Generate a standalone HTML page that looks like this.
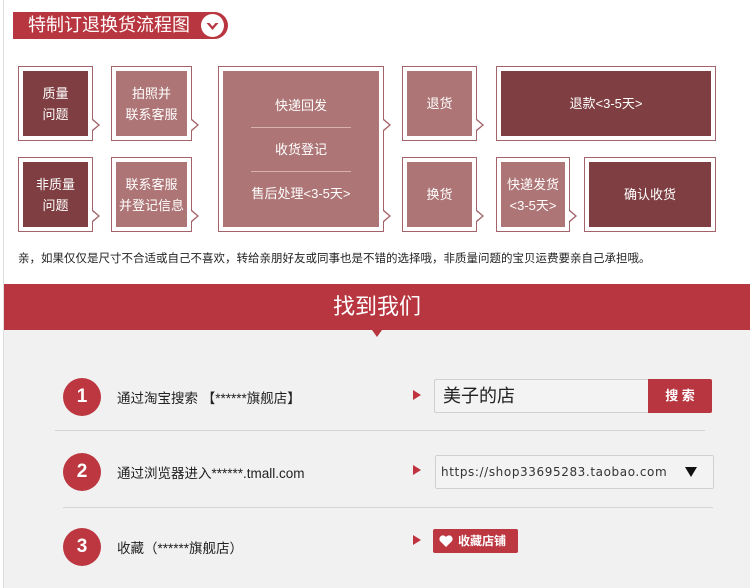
<!DOCTYPE html>
<html><head><meta charset="utf-8"><style>
*{margin:0;padding:0;box-sizing:border-box}
body{width:750px;height:588px;background:#fff;position:relative;overflow:hidden;font-family:"Liberation Sans","Noto Sans CJK SC",sans-serif}
.a{position:absolute}
.ob{position:absolute;border:1px solid #a4636a;background:#fff}
.ib{position:absolute;left:4px;top:4px;right:4px;bottom:4px;color:#fff;font-size:13px;display:flex;flex-direction:column;align-items:center;justify-content:center;text-align:center;line-height:21px}
.d{background:#7f3f42}.l{background:#ae7576}
.nt{position:absolute;width:0;height:0;border-top:6px solid transparent;border-bottom:6px solid transparent;border-left:7px solid #a4636a}
.nt:after{content:"";position:absolute;left:-8px;top:-5px;border-top:5px solid transparent;border-bottom:5px solid transparent;border-left:6px solid #fff}
.c{position:absolute;left:63px;width:38px;height:38px;border-radius:50%;background:#bd3741;color:#fff;font-weight:bold;font-size:19px;text-align:center;line-height:38px}
.t{position:absolute;left:117px;font-size:13.5px;color:#222}
.tri{position:absolute;left:413px;width:0;height:0;border-top:5px solid transparent;border-bottom:5px solid transparent;border-left:8px solid #c0323e}
</style></head><body>
<div class="a" style="left:3px;top:0;width:1px;height:588px;background:#ddd"></div>
<div class="a" style="left:13px;top:12px;width:215px;height:27px;background:#b83640;border-radius:0 14px 14px 0;color:#fff;font-size:18px;line-height:27px;padding-left:15px">特制订退换货流程图</div>
<div class="a" style="left:201px;top:14px;width:23px;height:23px;background:#fff;border-radius:50%"></div>
<svg class="a" style="left:201px;top:14px" width="23" height="23"><path d="M5.5 9 L11.5 16 L17.5 9 L14.5 9 L11.5 12.5 L8.5 9 Z" fill="#b83640"/></svg>

<div class="ob" style="left:18px;top:66px;width:75px;height:75px"><div class="ib d">质量<br>问题</div></div>
<div class="ob" style="left:111px;top:66px;width:81px;height:75px"><div class="ib l">拍照并<br>联系客服</div></div>
<div class="ob" style="left:18px;top:157px;width:75px;height:75px"><div class="ib d">非质量<br>问题</div></div>
<div class="ob" style="left:111px;top:157px;width:81px;height:75px"><div class="ib l">联系客服<br>并登记信息</div></div>
<div class="ob" style="left:218px;top:66px;width:166px;height:166px"><div class="ib l" style="justify-content:space-around;padding:18px 0">
<span>快递回发</span><span style="width:100px;height:1px;background:#d8b0b0"></span><span>收货登记</span><span style="width:100px;height:1px;background:#d8b0b0"></span><span>售后处理&lt;3-5天&gt;</span></div></div>
<div class="ob" style="left:402px;top:66px;width:75px;height:75px"><div class="ib l">退货</div></div>
<div class="ob" style="left:496px;top:66px;width:220px;height:75px"><div class="ib d">退款&lt;3-5天&gt;</div></div>
<div class="ob" style="left:402px;top:157px;width:75px;height:75px"><div class="ib l">换货</div></div>
<div class="ob" style="left:496px;top:157px;width:74px;height:75px"><div class="ib l">快递发货<br>&lt;3-5天&gt;</div></div>
<div class="ob" style="left:584px;top:157px;width:132px;height:75px"><div class="ib d">确认收货</div></div>
<div class="nt" style="left:93px;top:119px"></div>
<div class="nt" style="left:192px;top:119px"></div>
<div class="nt" style="left:93px;top:210px"></div>
<div class="nt" style="left:192px;top:210px"></div>
<div class="nt" style="left:384px;top:119px"></div>
<div class="nt" style="left:384px;top:210px"></div>
<div class="nt" style="left:477px;top:119px"></div>
<div class="nt" style="left:477px;top:210px"></div>
<div class="nt" style="left:570px;top:210px"></div>

<div class="a" style="left:18px;top:250px;font-size:11.5px;color:#222;white-space:nowrap">亲，如果仅仅是尺寸不合适或自己不喜欢，转给亲朋好友或同事也是不错的选择哦，非质量问题的宝贝运费要亲自己承担哦。</div>

<div class="a" style="left:4px;top:284px;width:746px;height:46px;background:#b83640;color:#fff;font-size:22px;text-align:center;line-height:46px">找到我们</div>
<div class="a" style="left:4px;top:330px;width:746px;height:258px;background:#f1f1f1"></div>
<div class="a" style="left:372px;top:330px;border-left:5px solid transparent;border-right:5px solid transparent;border-top:7px solid #b83640"></div>

<div class="c" style="top:378px">1</div>
<div class="t" style="top:387px">通过淘宝搜索 【******旗舰店】</div>
<div class="a" style="left:55px;top:430px;width:650px;height:1px;background:#d4d4d4"></div>
<div class="c" style="top:453px">2</div>
<div class="t" style="top:462px">通过浏览器进入******.tmall.com</div>
<div class="a" style="left:63px;top:507px;width:650px;height:1px;background:#d4d4d4"></div>
<div class="c" style="top:528px">3</div>
<div class="t" style="top:537px">收藏（******旗舰店）</div>

<div class="tri" style="top:390px"></div>
<div class="tri" style="top:465px"></div>
<div class="tri" style="top:535px"></div>
<div class="a" style="left:434px;top:379px;width:278px;height:34px;border:1px solid #d0d0d0;border-radius:2px;background:#f3f3f3;font-size:18px;line-height:32px;padding-left:8px;color:#222">美子的店</div>
<div class="a" style="left:648px;top:379px;width:64px;height:34px;background:#b83640;color:#fff;font-weight:bold;font-size:13px;text-align:center;line-height:34px;border-radius:0 2px 2px 0">搜 索</div>
<div class="a" style="left:435px;top:455px;width:279px;height:34px;border:1px solid #d0d0d0;border-radius:2px;background:#f3f3f3;font-family:'DejaVu Sans',sans-serif;font-size:12px;line-height:33px;padding-left:5px;color:#333;letter-spacing:0.6px">https://shop33695283.taobao.com</div>
<div class="a" style="left:685px;top:467px;border-left:6px solid transparent;border-right:6px solid transparent;border-top:10px solid #111"></div>
<div class="a" style="left:433px;top:529px;width:85px;height:24px;background:#bd3741;border-radius:2px;color:#fff;font-weight:bold;font-size:12px;line-height:24px;padding-left:25px">收藏店铺</div>
<svg class="a" style="left:439px;top:535px" width="14" height="12"><path d="M7 12 L1 6 A3.2 3.2 0 0 1 7 2 A3.2 3.2 0 0 1 13 6 Z" fill="#fff"/></svg>
</body></html>
